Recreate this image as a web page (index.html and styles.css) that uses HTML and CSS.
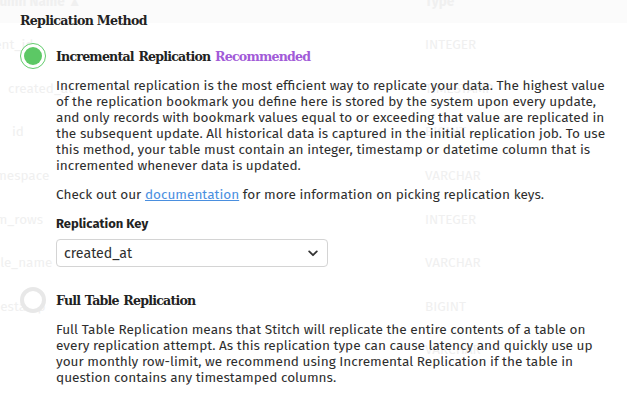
FILE: index.html
```html
<!DOCTYPE html>
<html>
<head>
<meta charset="utf-8">
<link rel="stylesheet" href="styles.css">
</head>
<body>
<div class="bg">
  <div class="bg-row bg-head"><span class="c-name">Column Name ▲</span><span class="c-type">Type</span></div>
  <div class="bg-row"><span class="c-name">client_id</span><span class="c-type">INTEGER</span></div>
  <div class="bg-row"><span class="c-name ind">created_at</span><span class="c-type">TIMESTAMP</span></div>
  <div class="bg-row"><span class="c-name ind2">id</span><span class="c-type">BIGINT</span></div>
  <div class="bg-row"><span class="c-name">namespace</span><span class="c-type">VARCHAR</span></div>
  <div class="bg-row"><span class="c-name">num_rows</span><span class="c-type">INTEGER</span></div>
  <div class="bg-row"><span class="c-name">table_name</span><span class="c-type">VARCHAR</span></div>
  <div class="bg-row"><span class="c-name">timestamp</span><span class="c-type">BIGINT</span></div>
  <div class="bg-row"><span class="c-name">uid</span><span class="c-type">VARCHAR</span></div>
</div>

<div class="panel">
  <h2 class="title">Replication Method</h2>

  <div class="option">
    <span class="radio on"><span class="dot"></span></span>
    <span class="opt-title">Incremental Replication <span class="rec">Recommended</span></span>
  </div>
  <div class="opt-body">
    <p class="text">Incremental replication is the most efficient way to replicate your data. The highest value of the replication bookmark you define here is stored by the system upon every update, and only records with bookmark values equal to or exceeding that value are replicated in the subsequent update. All historical data is captured in the initial replication job. To use this method, your table must contain an integer, timestamp or datetime column that is incremented whenever data is updated.</p>
    <p class="text check">Check out our <a class="link" href="#">documentation</a> for more information on picking replication keys.</p>
    <div class="label">Replication Key</div>
    <div class="select">
      <span>created_at</span>
      <svg class="chev" width="10" height="7" viewBox="0 0 10 7"><path d="M1.2 1.4 L5 5.2 L8.8 1.4" fill="none" stroke="#333" stroke-width="1.8" stroke-linecap="round" stroke-linejoin="round"/></svg>
    </div>
  </div>

  <div class="option second">
    <span class="radio off"></span>
    <span class="opt-title">Full Table Replication</span>
  </div>
  <div class="opt-body">
    <p class="text">Full Table Replication means that Stitch will replicate the entire contents of a table on every replication attempt. As this replication type can cause latency and quickly use up your monthly row-limit, we recommend using Incremental Replication if the table in question contains any timestamped columns.</p>
  </div>
</div>
</body>
</html>
```

FILE: styles.css
```css
html, body {
  margin: 0;
  padding: 0;
}
body {
  width: 627px;
  height: 402px;
  overflow: hidden;
  position: relative;
  background: #fff;
  font-family: "Fira Sans", "Lato", "Noto Sans", sans-serif;
}

/* faded table underneath */
.bg {
  margin-top: -21px;
  color: #f0f0f0;
  font-size: 13.5px;
}
.bg-row {
  height: 43.6px;
  display: flex;
  align-items: center;
}
.bg-head {
  height: 44px;
  background: #fbfbfb;
  font-weight: bold;
}
.c-name {
  width: 445px;
  margin-left: -20px;
}
.c-name.ind { margin-left: 8px; width: 417px; }
.c-name.ind2 { margin-left: 12px; width: 413px; }
.c-type {
  flex: 1;
}

/* overlay panel */
.panel {
  position: absolute;
  inset: 0;
  padding: 11px 20px 0 20px;
  color: #2e2e2e;
}
.title {
  margin: 0;
  font-family: "DejaVu Serif", serif;
  font-weight: 700;
  font-size: 12.6px;
  letter-spacing: -0.7px;
  line-height: 20px;
  color: #222;
}
.option {
  display: flex;
  align-items: center;
  gap: 10px;
  margin-top: 12px;
  height: 26px;
}
.option.second {
  margin-top: 20px;
}
.radio {
  width: 26px;
  height: 26px;
  box-sizing: border-box;
  border-radius: 50%;
  display: flex;
  align-items: center;
  justify-content: center;
  flex: none;
}
.radio.on {
  border: 1.5px solid #62cc6c;
  background: #fff;
}
.radio.on .dot {
  width: 18px;
  height: 18px;
  border-radius: 50%;
  background: #5cc865;
}
.radio.off {
  border: 4px solid #e8e8e8;
  background: #fff;
}
.opt-title {
  font-family: "DejaVu Serif", serif;
  font-weight: 700;
  font-size: 12.6px;
  letter-spacing: -0.8px;
  word-spacing: 1px;
  color: #222;
}
.rec {
  color: #a25bd8;
}
.opt-body {
  margin-left: 36px;
  margin-top: 9px;
}
.text {
  margin: 0;
  font-size: 13.6px;
  line-height: 16px;
  width: 553px;
}
.check {
  margin-top: 13px;
}
.link {
  color: #4a8fdf;
  text-decoration: underline;
}
.label {
  margin-top: 13px;
  font-weight: bold;
  font-size: 13px;
  line-height: 16px;
  color: #222;
}
.select {
  margin-top: 7px;
  width: 272px;
  height: 28px;
  box-sizing: border-box;
  border: 1px solid #d4d4d4;
  border-radius: 4px;
  display: flex;
  align-items: center;
  justify-content: space-between;
  padding: 0 9px 0 7px;
  font-size: 14.2px;
  background: #fff;
}
.chev {
  display: block;
}
```
